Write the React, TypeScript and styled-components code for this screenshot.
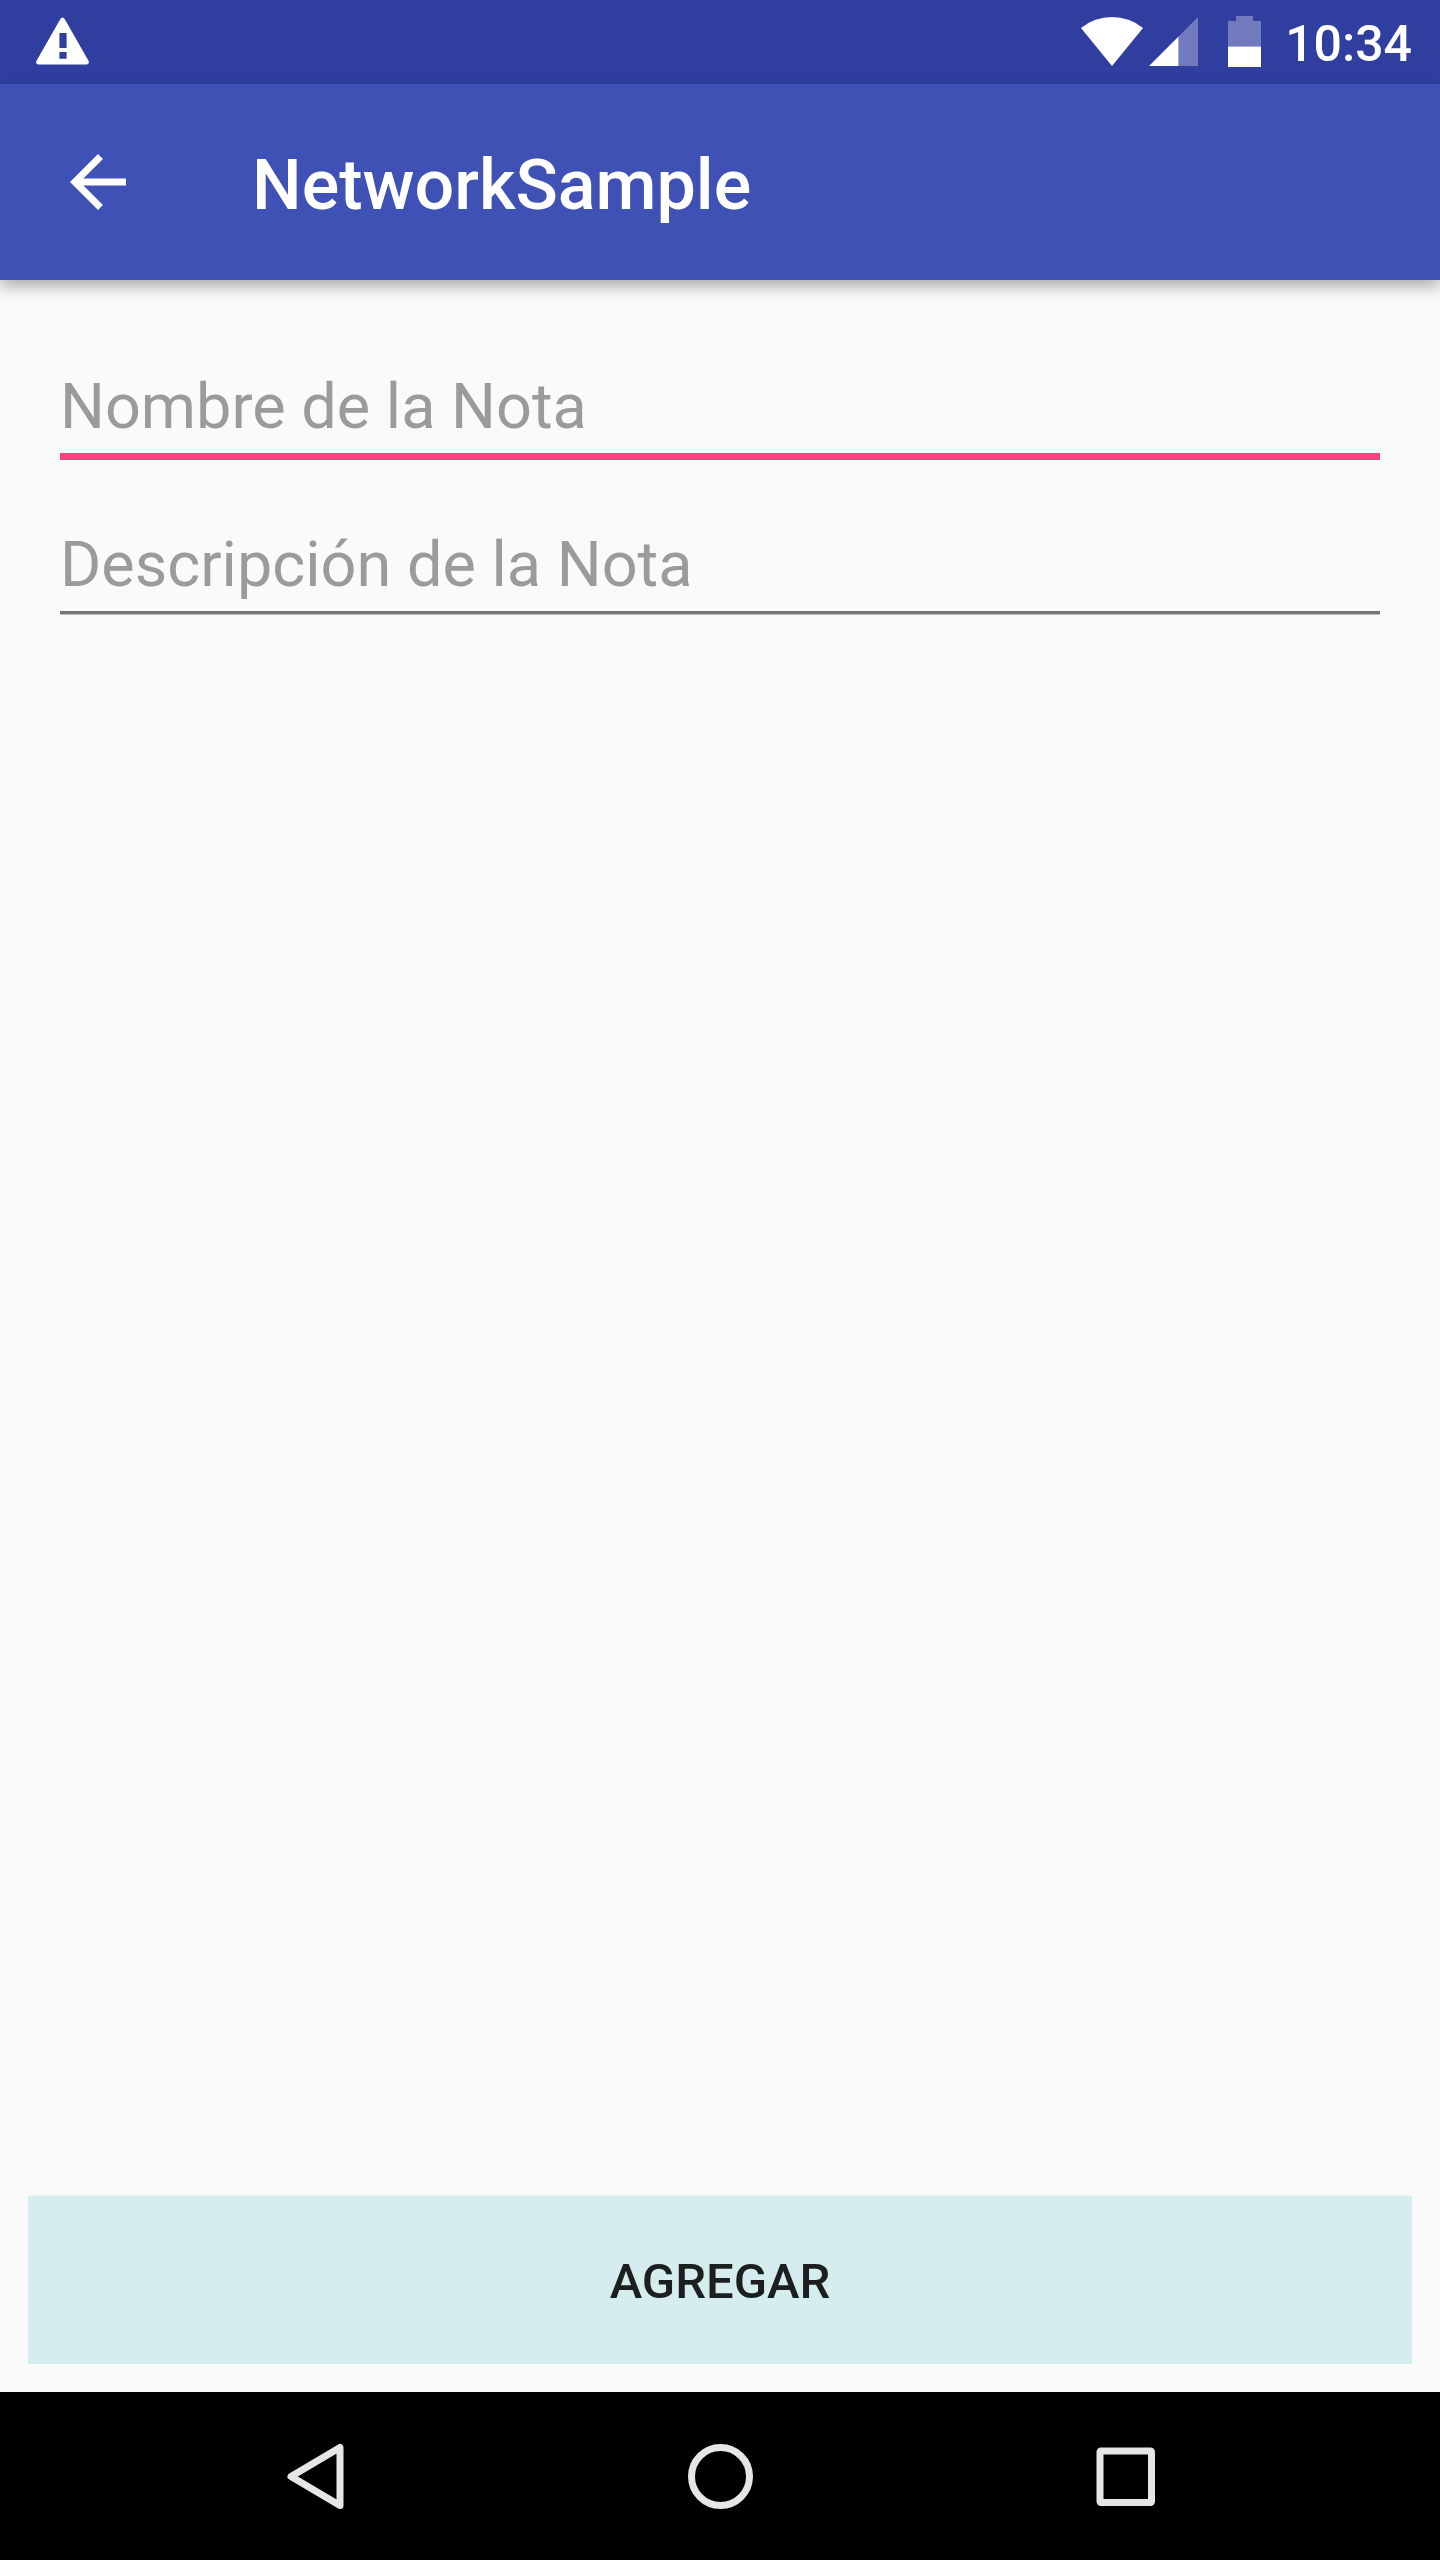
import React, { useState } from 'react';
import styled, { createGlobalStyle } from 'styled-components';

const GlobalStyle = createGlobalStyle`
  *, *::before, *::after { box-sizing: border-box; }
  body {
    margin: 0;
    background: #fafafa;
    font-family: Roboto, "Noto Sans", sans-serif;
  }
  svg { display: block; flex: none; }
`;

const Screen = styled.div`
  display: flex;
  flex-direction: column;
  min-height: 100vh;
`;

const StatusBar = styled.div`
  display: flex;
  align-items: center;
  justify-content: space-between;
  height: 84px;
  padding: 0 28px 0 36px;
  background: #303f9f;
  color: #fff;
`;

const StatusGroup = styled.div<{ $gap: number }>`
  display: flex;
  align-items: center;
  gap: ${({ $gap }) => $gap}px;
`;

const Clock = styled.time`
  padding-top: 4px;
  font-size: 50px;
  font-weight: 500;
  line-height: 58px;
`;

const AppBar = styled.header`
  display: flex;
  align-items: center;
  gap: 56px;
  height: 196px;
  background: #3f51b5;
  color: #fff;
  box-shadow: 0 7px 14px rgba(0, 0, 0, 0.3);
`;

const IconButton = styled.button`
  display: flex;
  align-items: center;
  justify-content: center;
  padding: 0;
  border: 0;
  background: none;
  color: inherit;
  cursor: pointer;
`;

const UpButton = styled(IconButton)`
  width: 196px;
  height: 196px;
`;

const Title = styled.h1`
  margin: 0;
  padding-top: 6px;
  font-size: 70px;
  font-weight: 500;
  line-height: 82px;
`;

const NoteForm = styled.form`
  display: flex;
  flex: 1;
  flex-direction: column;
  padding: 89px 28px 28px;
`;

const Fields = styled.div`
  display: grid;
  grid-auto-rows: 158px;
  padding: 0 32px;
`;

const TextField = styled.input<{ $active: boolean }>`
  align-self: start;
  width: 100%;
  height: ${({ $active }) => ($active ? 91 : 87)}px;
  padding: 0 0 10px;
  border: 0;
  border-bottom: ${({ $active }) => ($active ? '7px solid #ff4081' : '3px solid #757575')};
  border-radius: 0;
  outline: 0;
  background: transparent;
  box-shadow: ${({ $active }) => ($active ? 'none' : '0 1px 0 #bababa')};
  color: #212121;
  font-family: inherit;
  font-size: 63px;
  line-height: 74px;

  &::placeholder {
    color: #9b9b9b;
    opacity: 1;
  }
`;

const SubmitButton = styled.button`
  height: 168px;
  margin-top: auto;
  padding: 2px 0 0;
  border: 0;
  background: #d5edee;
  box-shadow: 0 -1px 0 #f2f2f0;
  color: #1b1f1f;
  font-family: inherit;
  font-size: 49px;
  font-weight: 500;
  text-transform: uppercase;
  cursor: pointer;
`;

const NavBar = styled.nav`
  display: flex;
  align-items: center;
  justify-content: space-between;
  height: 168px;
  padding: 0 266px;
  background: #000;
  color: #e6e6e6;
`;

const WarningIcon = () => (
  <svg width="53" height="52" viewBox="0 0 53 52" fill="currentColor" aria-hidden="true">
    <path
      fillRule="evenodd"
      d="M24.2 3.2Q26.5 0 28.8 3.2L52.6 45Q53.6 48.6 50.5 48.6H2.5Q-.6 48.6.4 45ZM23.4 17V32H30.6V17ZM23.4 36V42.8H30.6V36Z"
    />
  </svg>
);

const WifiIcon = () => (
  <svg width="62" height="52" viewBox="0 0 62 52" fill="currentColor" aria-hidden="true">
    <path d="M0 12A49.2 49.2 0 0 1 62 12L31 50Z" />
  </svg>
);

const SignalIcon = () => (
  <svg width="49" height="52" viewBox="0 0 49 52" fill="currentColor" aria-hidden="true">
    <path d="M29.5 20.5L49 1V50H29.5Z" opacity="0.31" />
    <path d="M0 50L29.5 20.5V50Z" />
  </svg>
);

const BatteryIcon = () => (
  <svg width="33" height="52" viewBox="0 0 33 52" fill="currentColor" aria-hidden="true">
    <path d="M0 5H8V0H25V5H33V30.5H0Z" opacity="0.31" />
    <path d="M0 30.5H33V51H0Z" />
  </svg>
);

const ArrowBackIcon = () => (
  <svg width="84" height="84" viewBox="0 0 24 24" fill="currentColor" aria-hidden="true">
    <path d="M20 11H7.83l5.59-5.59L12 4l-8 8 8 8 1.41-1.41L7.83 13H20v-2z" />
  </svg>
);

const NavIcon = ({ children }: { children: React.ReactNode }) => (
  <svg
    width="98"
    height="98"
    viewBox="0 0 98 98"
    fill="none"
    stroke="currentColor"
    strokeWidth="7"
    strokeLinejoin="round"
    aria-hidden="true"
  >
    {children}
  </svg>
);

const FIELDS = [
  { name: 'nombre', label: 'Nombre de la Nota' },
  { name: 'descripcion', label: 'Descripción de la Nota' },
];

export default function App() {
  const [active, setActive] = useState('nombre');

  return (
    <Screen>
      <GlobalStyle />
      <StatusBar>
        <WarningIcon />
        <StatusGroup $gap={24}>
          <StatusGroup $gap={30}>
            <StatusGroup $gap={6}>
              <WifiIcon />
              <SignalIcon />
            </StatusGroup>
            <BatteryIcon />
          </StatusGroup>
          <Clock>10:34</Clock>
        </StatusGroup>
      </StatusBar>
      <AppBar>
        <UpButton type="button" aria-label="Volver">
          <ArrowBackIcon />
        </UpButton>
        <Title>NetworkSample</Title>
      </AppBar>
      <NoteForm onSubmit={(event) => event.preventDefault()}>
        <Fields>
          {FIELDS.map(({ name, label }) => (
            <TextField
              key={name}
              type="text"
              name={name}
              aria-label={label}
              placeholder={label}
              $active={active === name}
              onFocus={() => setActive(name)}
            />
          ))}
        </Fields>
        <SubmitButton type="submit">Agregar</SubmitButton>
      </NoteForm>
      <NavBar>
        <IconButton type="button" aria-label="Atrás">
          <NavIcon>
            <path d="M25 49.5L74 20.5V78.5Z" />
          </NavIcon>
        </IconButton>
        <IconButton type="button" aria-label="Inicio">
          <NavIcon>
            <circle cx="49.5" cy="49.5" r="29" />
          </NavIcon>
        </IconButton>
        <IconButton type="button" aria-label="Recientes">
          <NavIcon>
            <rect x="24" y="24" width="51.5" height="51.5" rx="1" />
          </NavIcon>
        </IconButton>
      </NavBar>
    </Screen>
  );
}
